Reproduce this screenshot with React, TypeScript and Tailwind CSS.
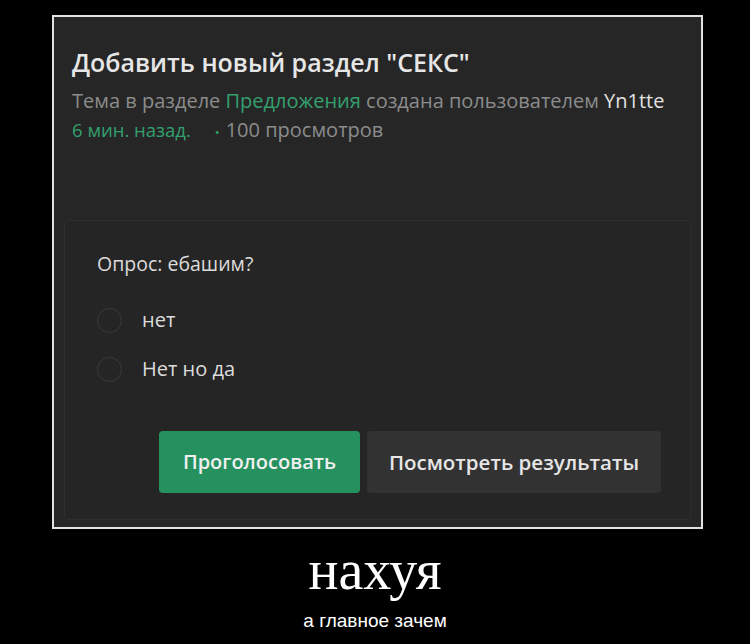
const sans = "font-['Open_Sans','Liberation_Sans',sans-serif]"

export default function App() {
  return (
    <div className="w-[750px] h-[644px] bg-black flex flex-col items-center overflow-hidden">
      {/* framed screenshot */}
      <div className="self-start ml-[52px] mt-[15px] w-[651px] h-[514px] border-2 border-[#e2e2e2] bg-[#262626] flex flex-col">
        <div className={`pl-[18px] pt-[29px] ${sans}`}>
          <h1 className="text-[25px] leading-[32px] font-semibold text-[#e6e6e6]">
            Добавить новый раздел "СЕКС"
          </h1>
          <p className="text-[20px] leading-[29px] text-[#8c8c8c] mt-[8px]">
            Тема в разделе <span className="text-[#33a06e]">Предложения</span> создана пользователем{' '}
            <span className="text-[#e2e2e2]">Yn1tte</span>
          </p>
          <p className="text-[20px] leading-[29px] text-[#8c8c8c]">
            <span className="text-[#33a06e] text-[18.5px]">6 мин. назад.</span>
            <span className="text-[#33a06e] text-[13px] pl-[24px] pr-[6px]">•</span>100 просмотров
          </p>
        </div>

        <div className="flex-1" />

        {/* poll */}
        <div className={`mx-[10px] mb-[7px] h-[300px] border border-[#2e2e2e] rounded-[3px] bg-[#252525] flex flex-col ${sans}`}>
          <p className="pl-[32px] pt-[29px] text-[19.5px] leading-[28px] text-[#dcdcdc]">Опрос: ебашим?</p>
          <div className="pl-[32px] mt-[28px] flex flex-col gap-[21px]">
            {['нет', 'Нет но да'].map((o) => (
              <label key={o} className="flex items-center gap-[20px]">
                <span className="w-[25px] h-[25px] rounded-full border border-[#3a3a3a]" />
                <span className="text-[20px] leading-[28px] text-[#dcdcdc]">{o}</span>
              </label>
            ))}
          </div>
          <div className="flex-1" />
          <div className="flex justify-end gap-[7px] pr-[29px] pb-[26px]">
            <button className="w-[201px] h-[62px] rounded-[4px] bg-[#25915f] text-[20px] font-semibold text-[#f0f0f0]">
              Проголосовать
            </button>
            <button className="w-[294px] h-[62px] rounded-[4px] bg-[#323232] text-[20.5px] font-semibold text-[#e6e6e6]">
              Посмотреть результаты
            </button>
          </div>
        </div>
      </div>

      {/* caption */}
      <p className="mt-[15px] text-[56px] leading-[52px] text-white font-['Liberation_Serif',serif]">нахуя</p>
      <p className="mt-[14px] text-[19px] leading-[22px] text-white font-['Liberation_Sans',sans-serif]">а главное зачем</p>
    </div>
  )
}
